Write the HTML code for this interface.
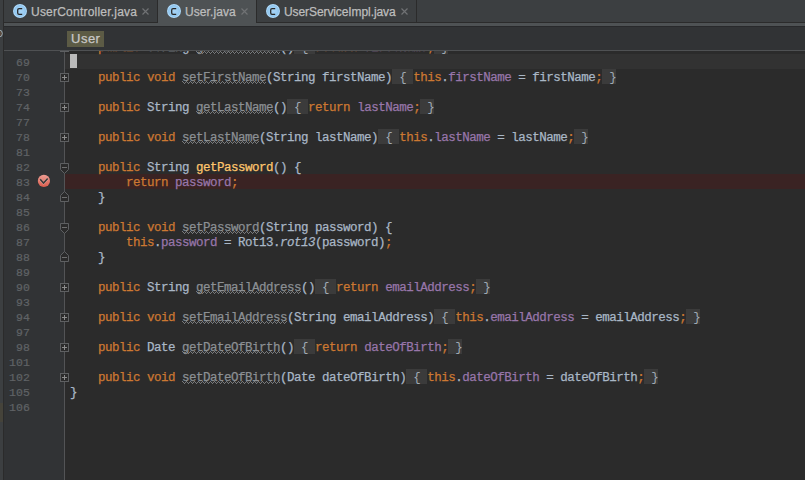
<!DOCTYPE html>
<html><head><meta charset="utf-8"><style>
*{margin:0;padding:0;box-sizing:border-box}
html,body{width:805px;height:480px;overflow:hidden;background:#2b2b2b}
.a{position:absolute}
.code{font-family:"Liberation Mono",monospace;font-size:12.5px;letter-spacing:-0.5px;line-height:15px;white-space:pre;height:15px;-webkit-text-stroke:0.25px}
.ln{font-family:"Liberation Mono",monospace;font-size:11.5px;letter-spacing:0.1px;line-height:15px;white-space:pre;color:#606366;text-align:right;width:30px;left:0;-webkit-text-stroke:0.2px}
.k{color:#cc7832}.t{color:#a9b7c6}.f{color:#9876aa}.m{color:#ffc66d}.i{color:#a9b7c6;font-style:italic}
.u{color:#8c9094}
.F{color:#a0aab4;-webkit-text-stroke:0}
.tab{font-family:"Liberation Sans",sans-serif;font-size:12px;letter-spacing:0.2px;color:#bdbdbd;line-height:15px;white-space:nowrap;-webkit-text-stroke:0.25px}
</style></head><body>

<svg width="0" height="0" style="position:absolute"><defs><pattern id="wv" x="0" y="0" width="4" height="3" patternUnits="userSpaceOnUse"><rect x="0" y="0" width="1" height="1" fill="#77797b"/><rect x="1" y="1" width="1" height="1" fill="#77797b"/><rect x="2" y="2" width="1" height="1" fill="#77797b"/><rect x="3" y="1" width="1" height="1" fill="#77797b"/></pattern></defs></svg>
<svg width="0" height="0" style="position:absolute"><defs><radialGradient id="cg" cx="0.5" cy="0.5" r="0.5"><stop offset="0" stop-color="#a6d3f5"/><stop offset="0.6" stop-color="#9bcdf2"/><stop offset="0.78" stop-color="#8fc5ee"/><stop offset="0.9" stop-color="#b3dbf8"/><stop offset="1" stop-color="#a0d0f4"/></radialGradient></defs></svg>
<div class="a" style="left:0;top:0;width:805px;height:480px;background:#2b2b2b"></div>
<div class="a" style="left:4px;top:51px;width:60px;height:429px;background:#313335"></div>
<div class="a" style="left:65px;top:54px;width:740px;height:15px;background:#323232"></div>
<div class="a" style="left:65px;top:174px;width:740px;height:15px;background:#3a2323"></div>
<svg class="a" style="left:196.0px;top:51px" width="84.0" height="3"><rect width="84.0" height="3" fill="url(#wv)"/></svg>
<div class="a" style="left:294.0px;top:39px;width:21.0px;height:15px;background:#3b3b3b"></div>
<div class="a" style="left:434.0px;top:39px;width:14.0px;height:15px;background:#3b3b3b"></div>
<div class="a code" style="left:70px;top:41px"><span class="t">    </span><span class="k">public</span><span class="t"> String </span><span class="u">getFirstName</span><span class="t">()</span><span class="F"> { </span><span class="k">return</span><span class="t"> </span><span class="f">firstName</span><span class="k">;</span><span class="F"> }</span></div>
<svg class="a" style="left:182.0px;top:81px" width="84.0" height="3"><rect width="84.0" height="3" fill="url(#wv)"/></svg>
<div class="a" style="left:392.0px;top:69px;width:21.0px;height:15px;background:#3b3b3b"></div>
<div class="a" style="left:602.0px;top:69px;width:14.0px;height:15px;background:#3b3b3b"></div>
<div class="a code" style="left:70px;top:71px"><span class="t">    </span><span class="k">public</span><span class="t"> </span><span class="k">void</span><span class="t"> </span><span class="u">setFirstName</span><span class="t">(String firstName)</span><span class="F"> { </span><span class="k">this</span><span class="t">.</span><span class="f">firstName</span><span class="t"> = firstName</span><span class="k">;</span><span class="F"> }</span></div>
<svg class="a" style="left:196.0px;top:111px" width="77.0" height="3"><rect width="77.0" height="3" fill="url(#wv)"/></svg>
<div class="a" style="left:287.0px;top:99px;width:21.0px;height:15px;background:#3b3b3b"></div>
<div class="a" style="left:420.0px;top:99px;width:14.0px;height:15px;background:#3b3b3b"></div>
<div class="a code" style="left:70px;top:101px"><span class="t">    </span><span class="k">public</span><span class="t"> String </span><span class="u">getLastName</span><span class="t">()</span><span class="F"> { </span><span class="k">return</span><span class="t"> </span><span class="f">lastName</span><span class="k">;</span><span class="F"> }</span></div>
<svg class="a" style="left:182.0px;top:141px" width="77.0" height="3"><rect width="77.0" height="3" fill="url(#wv)"/></svg>
<div class="a" style="left:378.0px;top:129px;width:21.0px;height:15px;background:#3b3b3b"></div>
<div class="a" style="left:574.0px;top:129px;width:14.0px;height:15px;background:#3b3b3b"></div>
<div class="a code" style="left:70px;top:131px"><span class="t">    </span><span class="k">public</span><span class="t"> </span><span class="k">void</span><span class="t"> </span><span class="u">setLastName</span><span class="t">(String lastName)</span><span class="F"> { </span><span class="k">this</span><span class="t">.</span><span class="f">lastName</span><span class="t"> = lastName</span><span class="k">;</span><span class="F"> }</span></div>
<div class="a code" style="left:70px;top:161px"><span class="t">    </span><span class="k">public</span><span class="t"> String </span><span class="m">getPassword</span><span class="t">() {</span></div>
<div class="a code" style="left:70px;top:176px"><span class="t">        </span><span class="k">return</span><span class="t"> </span><span class="f">password</span><span class="k">;</span></div>
<div class="a code" style="left:70px;top:191px"><span class="t">    }</span></div>
<svg class="a" style="left:182.0px;top:231px" width="77.0" height="3"><rect width="77.0" height="3" fill="url(#wv)"/></svg>
<div class="a code" style="left:70px;top:221px"><span class="t">    </span><span class="k">public</span><span class="t"> </span><span class="k">void</span><span class="t"> </span><span class="u">setPassword</span><span class="t">(String password) {</span></div>
<div class="a code" style="left:70px;top:236px"><span class="t">        </span><span class="k">this</span><span class="t">.</span><span class="f">password</span><span class="t"> = Rot13.</span><span class="i">rot13</span><span class="t">(password)</span><span class="k">;</span></div>
<div class="a code" style="left:70px;top:251px"><span class="t">    }</span></div>
<svg class="a" style="left:196.0px;top:291px" width="105.0" height="3"><rect width="105.0" height="3" fill="url(#wv)"/></svg>
<div class="a" style="left:315.0px;top:279px;width:21.0px;height:15px;background:#3b3b3b"></div>
<div class="a" style="left:476.0px;top:279px;width:14.0px;height:15px;background:#3b3b3b"></div>
<div class="a code" style="left:70px;top:281px"><span class="t">    </span><span class="k">public</span><span class="t"> String </span><span class="u">getEmailAddress</span><span class="t">()</span><span class="F"> { </span><span class="k">return</span><span class="t"> </span><span class="f">emailAddress</span><span class="k">;</span><span class="F"> }</span></div>
<svg class="a" style="left:182.0px;top:321px" width="105.0" height="3"><rect width="105.0" height="3" fill="url(#wv)"/></svg>
<div class="a" style="left:434.0px;top:309px;width:21.0px;height:15px;background:#3b3b3b"></div>
<div class="a" style="left:686.0px;top:309px;width:14.0px;height:15px;background:#3b3b3b"></div>
<div class="a code" style="left:70px;top:311px"><span class="t">    </span><span class="k">public</span><span class="t"> </span><span class="k">void</span><span class="t"> </span><span class="u">setEmailAddress</span><span class="t">(String emailAddress)</span><span class="F"> { </span><span class="k">this</span><span class="t">.</span><span class="f">emailAddress</span><span class="t"> = emailAddress</span><span class="k">;</span><span class="F"> }</span></div>
<svg class="a" style="left:182.0px;top:351px" width="98.0" height="3"><rect width="98.0" height="3" fill="url(#wv)"/></svg>
<div class="a" style="left:294.0px;top:339px;width:21.0px;height:15px;background:#3b3b3b"></div>
<div class="a" style="left:448.0px;top:339px;width:14.0px;height:15px;background:#3b3b3b"></div>
<div class="a code" style="left:70px;top:341px"><span class="t">    </span><span class="k">public</span><span class="t"> Date </span><span class="u">getDateOfBirth</span><span class="t">()</span><span class="F"> { </span><span class="k">return</span><span class="t"> </span><span class="f">dateOfBirth</span><span class="k">;</span><span class="F"> }</span></div>
<svg class="a" style="left:182.0px;top:381px" width="98.0" height="3"><rect width="98.0" height="3" fill="url(#wv)"/></svg>
<div class="a" style="left:406.0px;top:369px;width:21.0px;height:15px;background:#3b3b3b"></div>
<div class="a" style="left:644.0px;top:369px;width:14.0px;height:15px;background:#3b3b3b"></div>
<div class="a code" style="left:70px;top:371px"><span class="t">    </span><span class="k">public</span><span class="t"> </span><span class="k">void</span><span class="t"> </span><span class="u">setDateOfBirth</span><span class="t">(Date dateOfBirth)</span><span class="F"> { </span><span class="k">this</span><span class="t">.</span><span class="f">dateOfBirth</span><span class="t"> = dateOfBirth</span><span class="k">;</span><span class="F"> }</span></div>
<div class="a code" style="left:70px;top:386px"><span class="t">}</span></div>
<div class="a" style="left:70px;top:54px;width:7px;height:14px;background:#bbbbbb"></div>
<div class="a ln" style="top:40px">66</div>
<div class="a ln" style="top:55px">69</div>
<div class="a ln" style="top:70px">70</div>
<div class="a ln" style="top:85px">73</div>
<div class="a ln" style="top:100px">74</div>
<div class="a ln" style="top:115px">77</div>
<div class="a ln" style="top:130px">78</div>
<div class="a ln" style="top:145px">81</div>
<div class="a ln" style="top:160px">82</div>
<div class="a ln" style="top:175px">83</div>
<div class="a ln" style="top:190px">84</div>
<div class="a ln" style="top:205px">85</div>
<div class="a ln" style="top:220px">86</div>
<div class="a ln" style="top:235px">87</div>
<div class="a ln" style="top:250px">88</div>
<div class="a ln" style="top:265px">89</div>
<div class="a ln" style="top:280px">90</div>
<div class="a ln" style="top:295px">93</div>
<div class="a ln" style="top:310px">94</div>
<div class="a ln" style="top:325px">97</div>
<div class="a ln" style="top:340px">98</div>
<div class="a ln" style="top:355px">101</div>
<div class="a ln" style="top:370px">102</div>
<div class="a ln" style="top:385px">105</div>
<div class="a ln" style="top:400px">106</div>
<div class="a" style="left:64px;top:51px;width:1px;height:429px;background:#535456"></div>
<svg class="a" style="left:60px;top:43px" width="9" height="9"><rect x="0.5" y="0.5" width="8" height="8" fill="#2b2b2b" stroke="#5e6062"/><path d="M2 4.5H7M4.5 2V7" stroke="#8c8c8c"/></svg>
<svg class="a" style="left:60px;top:73px" width="9" height="9"><rect x="0.5" y="0.5" width="8" height="8" fill="#2b2b2b" stroke="#5e6062"/><path d="M2 4.5H7M4.5 2V7" stroke="#8c8c8c"/></svg>
<svg class="a" style="left:60px;top:103px" width="9" height="9"><rect x="0.5" y="0.5" width="8" height="8" fill="#2b2b2b" stroke="#5e6062"/><path d="M2 4.5H7M4.5 2V7" stroke="#8c8c8c"/></svg>
<svg class="a" style="left:60px;top:133px" width="9" height="9"><rect x="0.5" y="0.5" width="8" height="8" fill="#2b2b2b" stroke="#5e6062"/><path d="M2 4.5H7M4.5 2V7" stroke="#8c8c8c"/></svg>
<svg class="a" style="left:60px;top:283px" width="9" height="9"><rect x="0.5" y="0.5" width="8" height="8" fill="#2b2b2b" stroke="#5e6062"/><path d="M2 4.5H7M4.5 2V7" stroke="#8c8c8c"/></svg>
<svg class="a" style="left:60px;top:313px" width="9" height="9"><rect x="0.5" y="0.5" width="8" height="8" fill="#2b2b2b" stroke="#5e6062"/><path d="M2 4.5H7M4.5 2V7" stroke="#8c8c8c"/></svg>
<svg class="a" style="left:60px;top:343px" width="9" height="9"><rect x="0.5" y="0.5" width="8" height="8" fill="#2b2b2b" stroke="#5e6062"/><path d="M2 4.5H7M4.5 2V7" stroke="#8c8c8c"/></svg>
<svg class="a" style="left:60px;top:373px" width="9" height="9"><rect x="0.5" y="0.5" width="8" height="8" fill="#2b2b2b" stroke="#5e6062"/><path d="M2 4.5H7M4.5 2V7" stroke="#8c8c8c"/></svg>
<svg class="a" style="left:60px;top:163px" width="9" height="11"><path d="M0.5 0.5H8.5V6.5L4.5 10.5L0.5 6.5Z" fill="#2b2b2b" stroke="#5e6062"/><path d="M2 4.5H7" stroke="#6e6e6e"/></svg>
<svg class="a" style="left:60px;top:223px" width="9" height="11"><path d="M0.5 0.5H8.5V6.5L4.5 10.5L0.5 6.5Z" fill="#2b2b2b" stroke="#5e6062"/><path d="M2 4.5H7" stroke="#6e6e6e"/></svg>
<svg class="a" style="left:60px;top:191px" width="9" height="11"><path d="M0.5 10.5H8.5V4.5L4.5 0.5L0.5 4.5Z" fill="#2b2b2b" stroke="#5e6062"/><path d="M2 6.5H7" stroke="#6e6e6e"/></svg>
<svg class="a" style="left:60px;top:251px" width="9" height="11"><path d="M0.5 10.5H8.5V4.5L4.5 0.5L0.5 4.5Z" fill="#2b2b2b" stroke="#5e6062"/><path d="M2 6.5H7" stroke="#6e6e6e"/></svg>
<svg class="a" style="left:37px;top:174px" width="14" height="14"><defs><linearGradient id="bp" x1="0" y1="0" x2="0" y2="1"><stop offset="0" stop-color="#ec9d93"/><stop offset="1" stop-color="#db5c4c"/></linearGradient></defs>
<circle cx="6.9" cy="6.9" r="6.1" fill="url(#bp)"/><path d="M3.2 5.3L6.5 9L10.7 4.5" stroke="#f2c0b8" stroke-width="2.6" fill="none" opacity="0.5"/><path d="M3.2 5.3L6.5 9L10.7 4.5" stroke="#3a3a3a" stroke-width="1.6" fill="none"/></svg>
<div class="a" style="left:4px;top:27px;width:801px;height:23px;background:#313335"></div>
<div class="a" style="left:4px;top:50px;width:801px;height:1px;background:#4f5153"></div>
<div class="a" style="left:67px;top:31px;width:37px;height:16px;background:#5c5b45"></div>
<div class="a tab" style="left:71px;top:31px;color:#c8c8c8;font-size:13px;letter-spacing:0.5px">User</div>
<div class="a" style="left:4px;top:0;width:801px;height:22px;background:#3c3f41"></div>
<div class="a" style="left:4px;top:22px;width:801px;height:1px;background:#2b2b2b"></div>
<div class="a" style="left:4px;top:23px;width:801px;height:3px;background:#4e5254"></div>
<div class="a" style="left:4px;top:26px;width:801px;height:1px;background:#28292b"></div>
<div class="a" style="left:158px;top:0;width:98px;height:23px;background:#4e5254"></div>
<div class="a" style="left:157px;top:0;width:1px;height:22px;background:#2b2b2b"></div>
<div class="a" style="left:256px;top:0;width:1px;height:22px;background:#2b2b2b"></div>
<div class="a" style="left:416px;top:0;width:1px;height:22px;background:#2b2b2b"></div>
<svg class="a" style="left:12px;top:3px" width="16" height="16"><circle cx="8" cy="8" r="7" fill="url(#cg)"/><path d="M10.2 5.6H7.1Q5.7 5.6 5.7 7V9.9Q5.7 11.3 7.1 11.3H10.2" stroke="#262626" stroke-width="1.25" fill="none"/></svg>
<div class="a tab" style="left:31px;top:5px;letter-spacing:0.22px">UserController.java</div>
<svg class="a" style="left:142px;top:8px" width="7" height="7"><path d="M0.5 0.5L6.5 6.5M6.5 0.5L0.5 6.5" stroke="#707274" stroke-width="1.2"/></svg>
<svg class="a" style="left:166px;top:3px" width="16" height="16"><circle cx="8" cy="8" r="7" fill="url(#cg)"/><path d="M10.2 5.6H7.1Q5.7 5.6 5.7 7V9.9Q5.7 11.3 7.1 11.3H10.2" stroke="#262626" stroke-width="1.25" fill="none"/></svg>
<div class="a tab" style="left:185px;top:5px;letter-spacing:0.09px">User.java</div>
<svg class="a" style="left:241px;top:8px" width="7" height="7"><path d="M0.5 0.5L6.5 6.5M6.5 0.5L0.5 6.5" stroke="#707274" stroke-width="1.2"/></svg>
<svg class="a" style="left:265px;top:3px" width="16" height="16"><circle cx="8" cy="8" r="7" fill="url(#cg)"/><path d="M10.2 5.6H7.1Q5.7 5.6 5.7 7V9.9Q5.7 11.3 7.1 11.3H10.2" stroke="#262626" stroke-width="1.25" fill="none"/></svg>
<div class="a tab" style="left:284px;top:5px;letter-spacing:-0.09px">UserServiceImpl.java</div>
<svg class="a" style="left:401px;top:8px" width="7" height="7"><path d="M0.5 0.5L6.5 6.5M6.5 0.5L0.5 6.5" stroke="#707274" stroke-width="1.2"/></svg>
<div class="a" style="left:0;top:0;width:3px;height:480px;background:#3c3f41"></div>
<div class="a" style="left:3px;top:0;width:1px;height:480px;background:#2b2b2b"></div>
<div class="a" style="left:0;top:403px;width:3px;height:19px;background:#45433a"></div>
<svg class="a" style="left:0;top:29px" width="3" height="9"><circle cx="-1.2" cy="4.5" r="3.6" fill="#5a4a3e" stroke="#9fb2bd" stroke-width="0.9"/></svg>
</body></html>
